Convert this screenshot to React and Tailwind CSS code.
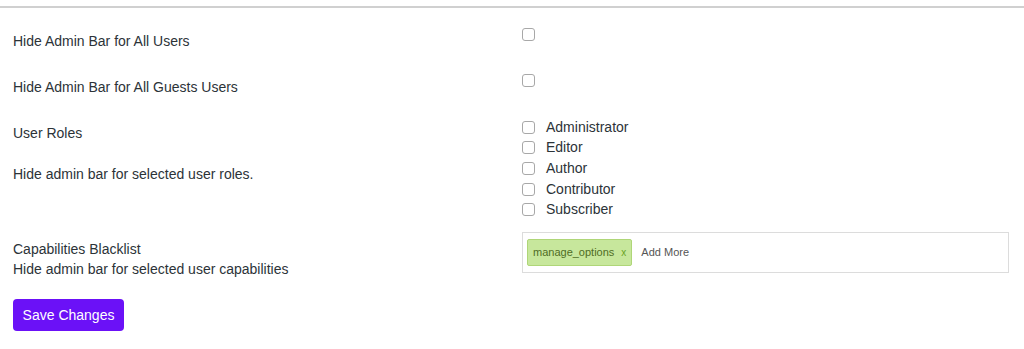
import { useState } from 'react'

const roles = ['Administrator', 'Editor', 'Author', 'Contributor', 'Subscriber']

function Box({ checked, onChange }) {
  return (
    <button
      type="button"
      onClick={onChange}
      className="w-[13px] h-[13px] rounded-[3px] border border-[#a8a8a8] bg-white shrink-0 flex items-center justify-center"
    >
      {checked && <span className="w-[7px] h-[7px] rounded-[1px] bg-[#6b12f6]" />}
    </button>
  )
}

export default function App() {
  const [all, setAll] = useState(false)
  const [guests, setGuests] = useState(false)
  const [picked, setPicked] = useState({})
  const [caps, setCaps] = useState(['manage_options'])

  return (
    <div
      className="w-[1024px] h-[349px] bg-white text-[14px] text-[#2c3338] overflow-hidden"
      style={{ fontFamily: '"Liberation Sans", Arial, sans-serif' }}
    >
      <div className="mt-[6px] border-t-2 border-[#d0d0d0]" />

      <div className="grid grid-cols-[509px_1fr] pl-[13px] h-[45px]">
        <div className="pt-[23px] leading-[20px]">Hide Admin Bar for All Users</div>
        <div className="pt-[20px]">
          <Box checked={all} onChange={() => setAll(!all)} />
        </div>
      </div>

      <div className="grid grid-cols-[509px_1fr] pl-[13px] h-[45px]">
        <div className="pt-[24px] leading-[20px]">Hide Admin Bar for All Guests Users</div>
        <div className="pt-[21px]">
          <Box checked={guests} onChange={() => setGuests(!guests)} />
        </div>
      </div>

      <div className="grid grid-cols-[509px_1fr] pl-[13px] h-[122px]">
        <div className="pt-[25px] leading-[20px]">
          <div>User Roles</div>
          <div className="mt-[21px]">Hide admin bar for selected user roles.</div>
        </div>
        <div className="pt-[19px]">
          {roles.map((r) => (
            <label key={r} className="flex items-center gap-[11px] h-[20.6px]">
              <Box
                checked={!!picked[r]}
                onChange={() => setPicked({ ...picked, [r]: !picked[r] })}
              />
              <span>{r}</span>
            </label>
          ))}
        </div>
      </div>

      <div className="grid grid-cols-[509px_1fr] pl-[13px]">
        <div className="pt-[19px] leading-[20px]">
          <div>Capabilities Blacklist</div>
          <div>Hide admin bar for selected user capabilities</div>
        </div>
        <div className="pt-[12px]">
          <div className="w-[487px] h-[41px] border border-[#dcdcdc] flex items-center gap-[9px] px-[4px]">
            {caps.map((c) => (
              <span
                key={c}
                className="h-[27px] px-[5px] flex items-center gap-[7px] bg-[#c7e79c] border border-[#afd678] rounded-[2px] text-[11px] text-[#4f6d24]"
              >
                {c}
                <button
                  type="button"
                  onClick={() => setCaps(caps.filter((x) => x !== c))}
                  className="text-[10px] text-[#6aa322] leading-none"
                >
                  x
                </button>
              </span>
            ))}
            <span className="text-[11px] text-[#555]">Add More</span>
          </div>
        </div>
      </div>

      <div className="pl-[13px] mt-[20px]">
        <button
          type="button"
          className="h-[32px] w-[111px] rounded-[4px] bg-[#6b11f7] text-white text-[14px]"
        >
          Save Changes
        </button>
      </div>
    </div>
  )
}
